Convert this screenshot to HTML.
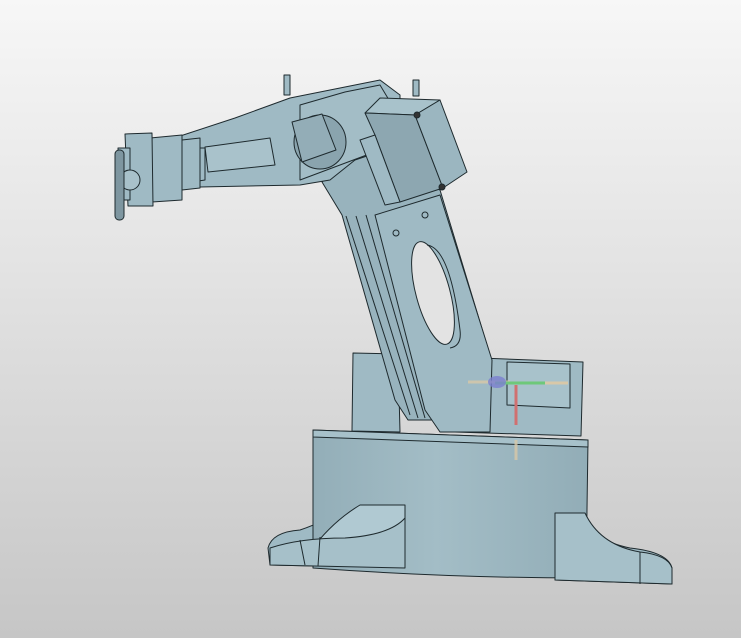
<!DOCTYPE html>
<html><head><meta charset="utf-8"><style>
html,body{margin:0;padding:0;width:741px;height:638px;overflow:hidden}
body{background:linear-gradient(#f7f7f7 0%,#e4e4e4 40%,#c6c6c6 100%)}
svg{position:absolute;left:0;top:0}
</style></head><body>
<svg width="741" height="638" viewBox="0 0 741 638" xmlns="http://www.w3.org/2000/svg">
<defs>
<linearGradient id="cyl" x1="0" x2="1" y1="0" y2="0">
<stop offset="0" stop-color="#93aeb8"/><stop offset="0.45" stop-color="#a3bdc6"/><stop offset="1" stop-color="#92adb7"/>
</linearGradient>
</defs>
<g stroke="#1e2a2e" stroke-width="1" stroke-linejoin="round" fill="#9fbac4">
<path d="M268 548 Q272 532 300 530 Q330 520 345 505 L405 505 L405 568 L270 565 Z"/>
<path d="M555 513 L585 513 Q590 540 630 548 Q668 552 672 568 L672 584 L555 580 Z"/>
<path d="M313 430 L588 440 L586 578 Q450 578 313 568 Z" fill="url(#cyl)"/>
<path d="M313 430 L588 440 L588 447 L313 437 Z" fill="#a7c1ca"/>
<path d="M315 545 Q335 520 360 505 L405 505 L405 520 Q390 540 360 545 Z" fill="#b0c9d2"/>
<path d="M270 548 Q300 538 345 538 Q390 535 405 518 L405 568 L270 565 Z" fill="#a6c0c9"/>
<path d="M555 513 L585 513 Q600 545 640 552 Q668 555 672 568 L672 584 L555 580 Z" fill="#a6c0c9"/>
<path d="M555 530 L555 580 M640 552 L640 584 M300 540 L305 565 M320 537 L318 566" fill="none"/>
<path d="M353 353 L398 354 L400 432 L352 431 Z"/>
<path d="M455 357 L583 362 L581 436 L455 432 Z"/>
<path d="M507 362 L570 364 L570 408 L507 405 Z" fill="#a8c2cb"/>
<path d="M322 182 L360 150 L440 190 L490 355 L470 420 L408 420 L395 400 L342 215 Z" fill="#98b3bd"/>
<path d="M375 215 L440 195 L492 360 L490 432 L440 432 L425 410 Z"/>
<path d="M346 216 L410 415 M356 216 L418 418 M366 215 L425 418" fill="none"/>
<ellipse cx="433" cy="293" rx="17" ry="53" transform="rotate(-15 433 293)" fill="#e3e3e3"/>
<path d="M427 245 Q450 248 460 330 Q462 346 450 348" fill="none"/>
<circle cx="396" cy="233" r="3"/><circle cx="425" cy="215" r="3"/>
<path d="M168 140 L235 118 L290 98 L380 80 L400 95 L400 145 L355 160 L330 180 L300 185 L200 187 L175 180 Z"/>
<path d="M300 105 L345 92 L380 85 L395 110 L380 150 L340 165 L300 180 Z" fill="#a3bdc6"/>
<ellipse cx="320" cy="142" rx="26" ry="27" fill="#8aa4ae"/>
<path d="M292 122 L322 114 L336 150 L302 162 Z" fill="#93adb7"/>
<path d="M205 147 L270 138 L275 165 L208 172 Z" fill="#a9c2cb"/>
<path d="M190 148 L205 148 L205 180 L192 182 Z"/>
<path d="M182 140 L200 138 L200 188 L182 190 Z"/>
<path d="M150 138 L182 135 L182 200 L152 202 Z"/>
<path d="M125 134 L152 133 L153 206 L128 206 Z"/>
<path d="M118 148 L130 148 L130 200 L120 200 Z"/>
<circle cx="130" cy="180" r="10" fill="#a8c1ca"/>
<rect x="115" y="150" width="9" height="70" rx="4" fill="#7e96a0"/>
<path d="M365 113 L380 98 L440 100 L415 115 Z" fill="#a8c2cb"/>
<path d="M365 113 L415 115 L443 188 L400 202 L375 135 Z" fill="#8da7b1"/>
<path d="M415 115 L440 100 L467 172 L443 188 Z" fill="#9bb6c0"/>
<path d="M360 140 L375 135 L400 202 L385 205 Z"/>
<circle cx="417" cy="115" r="3" fill="#333"/><circle cx="442" cy="187" r="3" fill="#333"/>
<rect x="284" y="75" width="6" height="20"/>
<rect x="413" y="80" width="6" height="16"/>
</g>
<g stroke-width="3" fill="none">
<line x1="468" y1="382" x2="510" y2="382" stroke="#d8c8a8" opacity="0.8"/>
<line x1="495" y1="383" x2="545" y2="383" stroke="#6ec87a"/>
<line x1="545" y1="383" x2="568" y2="383" stroke="#d8c8a8"/>
<line x1="516" y1="385" x2="516" y2="425" stroke="#d07070"/>
<line x1="516" y1="440" x2="516" y2="460" stroke="#d8c8a8" opacity="0.8"/>
</g>
<ellipse cx="497" cy="382" rx="9" ry="6" fill="#7b7fd0" opacity="0.8"/>
</svg>
</body></html>
